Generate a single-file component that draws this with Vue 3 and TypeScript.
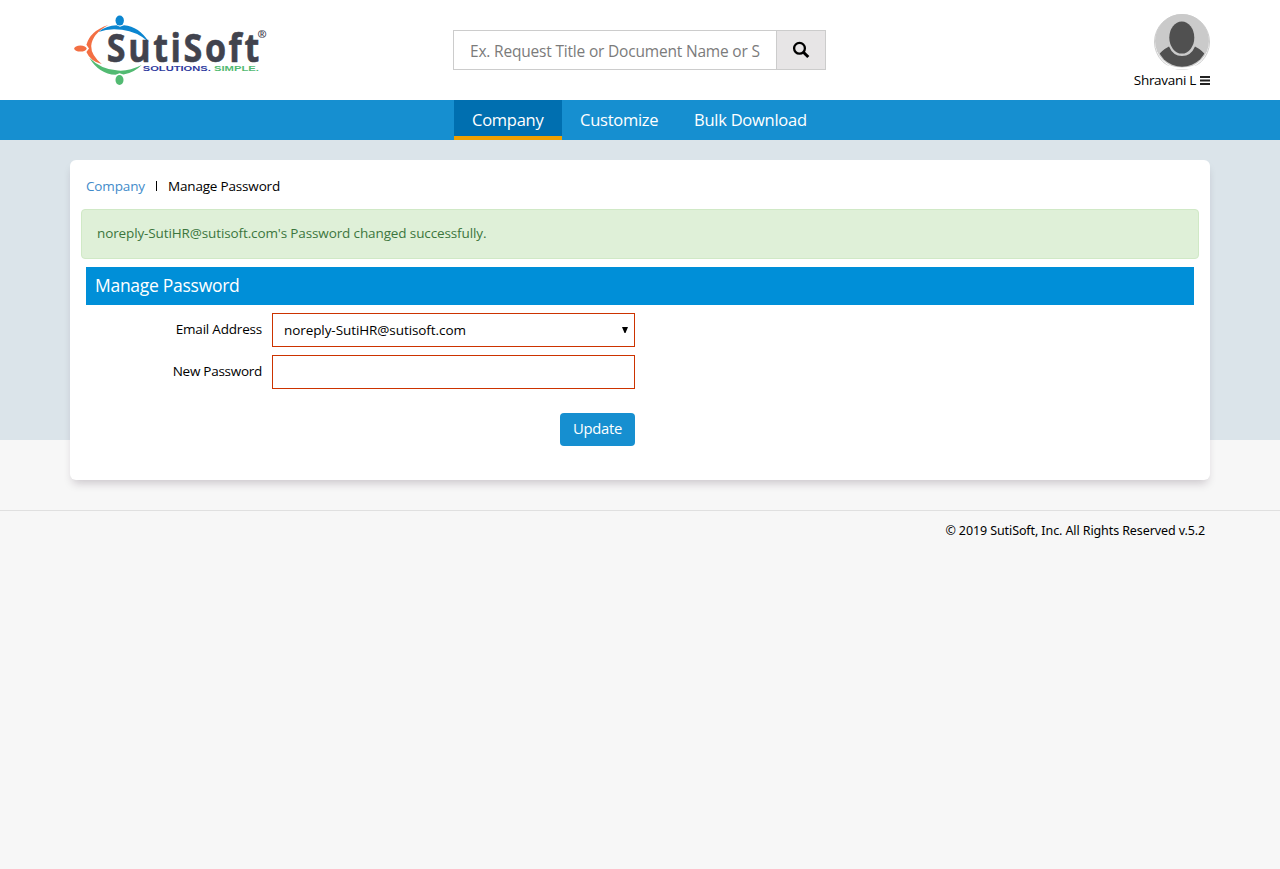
<script setup lang="ts">
import { ref } from 'vue'

const query = ref('')
const email = ref('noreply-SutiHR@sutisoft.com')
const password = ref('')
const tabs = [
  { label: 'Company', cls: 'company', active: true },
  { label: 'Customize', cls: 'customize', active: false },
  { label: 'Bulk Download', cls: 'bulk', active: false },
]
</script>

<template>
  <div class="page">
    <header class="header">
      <svg class="logo" viewBox="70 10 200 80" width="200" height="80" role="img" aria-label="SutiSoft">
        <ellipse cx="119.7" cy="20.6" rx="4.2" ry="5" fill="#0b86d0" />
        <path d="M98.3 31.9Q107 25.3 116.500 25.300L120 26.800L124 25.300Q139 26.500 149 42.200Q137 31.500 122 29.800Q109 28 98.300 31.900Z" fill="#0b86d0" />
        <ellipse cx="80.4" cy="48.6" rx="6.200" ry="3" fill="#f36f43" />
        <path d="M108.300 25Q90 31 86.400 44.800L89 48.500L86.400 52Q90.500 61.500 101.700 64Q91 55 91.200 46Q92 34 108.300 25Z" fill="#f36f43" />
        <path d="M89.300 57.700Q99 74 115.500 74.800L119.500 73.200L123.500 74.600Q134.500 72.500 141.700 65Q129 71.500 118 70.600Q101 69.500 89.300 57.700Z" fill="#52ba72" />
        <ellipse cx="119.500" cy="80" rx="4" ry="5" fill="#52ba72" />
        <text class="wordmark" x="106.800" y="62.400" textLength="155" lengthAdjust="spacingAndGlyphs">SutiSoft</text>
        <text class="registered" x="257.400" y="37.800">®</text>
        <text class="motto solutions" x="142.800" y="70.800" textLength="68" lengthAdjust="spacingAndGlyphs">SOLUTIONS.</text>
        <text class="motto simple" x="214" y="70.800" textLength="45" lengthAdjust="spacingAndGlyphs">SIMPLE.</text>
      </svg>

      <form class="search" @submit.prevent>
        <input v-model="query" type="text" placeholder="Ex. Request Title or Document Name or S" />
        <button type="submit" aria-label="Search">
          <svg viewBox="0 0 18 18" width="18" height="18">
            <circle cx="7.500" cy="7.300" r="5.400" fill="none" stroke="#000" stroke-width="2.300" />
            <path d="M11.400 11.200L16.300 16" stroke="#000" stroke-width="3" fill="none" />
          </svg>
        </button>
      </form>

      <div class="user">
        <svg class="avatar" viewBox="0 0 56 56" width="56" height="56">
          <defs><clipPath id="face"><circle cx="28" cy="27" r="25.700" /></clipPath></defs>
          <circle cx="28" cy="28" r="27.500" fill="#fff" stroke="#ccc" />
          <circle cx="28" cy="27" r="27" fill="#cacaca" />
          <path d="M4 45Q10 53 28 53.500Q46 53 52 45L50 50Q40 55.500 28 55.500Q16 55.500 6 50Z" fill="#fff" />
          <path clip-path="url(#face)" d="M0 47Q6 37 15 32.500Q19 42 28 42Q37 42 41 32.500Q50 37 56 47V56H0Z" fill="#505050" />
          <ellipse cx="27.800" cy="23.600" rx="12.500" ry="16" fill="#505050" />
        </svg>
        <div class="user-name">
          <span>Shravani L</span>
          <svg viewBox="0 0 10 9" width="10" height="9"><path d="M0 1H10M0 4.500H10M0 8H10" stroke="#222" stroke-width="2" /></svg>
        </div>
      </div>
    </header>

    <nav class="nav">
      <a v-for="tab in tabs" :key="tab.label" :class="[tab.cls, { active: tab.active }]"><span>{{ tab.label }}</span></a>
    </nav>

    <main class="band">
      <section class="card">
        <div class="crumbs">
          <a>Company</a><i class="divider"></i><span>Manage Password</span>
        </div>
        <div class="alert"><span>noreply-SutiHR@sutisoft.com's Password changed successfully.</span></div>
        <h1><span>Manage Password</span></h1>
        <form class="form" @submit.prevent>
          <label for="email"><span class="l-email">Email Address</span></label>
          <div class="select">
            <select id="email" v-model="email">
              <option>noreply-SutiHR@sutisoft.com</option>
            </select>
            <svg viewBox="0 0 6 6" width="6" height="6"><path d="M0 0H6L3.500 6H2.500Z" fill="#000" /></svg>
          </div>
          <label for="password"><span class="l-pass">New Password</span></label>
          <input id="password" v-model="password" type="password" />
          <button class="update" type="submit">Update</button>
        </form>
      </section>
    </main>

    <footer class="footer"><span>© 2019 SutiSoft, Inc. All Rights Reserved v.5.2</span></footer>
  </div>
</template>

<style>
body {
  background: #f7f7f7;
}
</style>

<style scoped>
* {
  box-sizing: border-box;
}
.page {
  min-height: 869px;
  background: #f7f7f7;
  color: #000;
  font: 13.5px/20px "Open Sans", "Noto Sans", sans-serif;
  white-space: nowrap;
}
input,
select,
button {
  font-family: inherit;
  margin: 0;
  outline: 0;
}
.header {
  height: 100px;
  padding: 0 70px;
  background: #fff;
  display: grid;
  grid-template-columns: 383px 373px 1fr;
}
.logo {
  margin-top: 10px;
  overflow: visible;
}
.wordmark {
  font: bold 39px "Open Sans", sans-serif;
  letter-spacing: 3px;
  fill: #41434e;
  stroke: #41434e;
  stroke-width: 0.6px;
}
.registered {
  font: bold 11px "Open Sans", sans-serif;
  fill: #41434e;
}
.motto {
  font: bold 8px "Liberation Sans", sans-serif;
}
.solutions {
  fill: #2e3a9e;
}
.simple {
  fill: #52ba72;
}
.search {
  height: 40px;
  margin-top: 30px;
  display: flex;
  border: 1px solid #ccc;
}
.search input {
  width: 323px;
  border: 0;
  border-right: 1px solid #ccc;
  padding: 2px 14px 0 16px;
  font-size: 15.5px;
  letter-spacing: -0.19px;
  color: #555;
  background: #fff;
}
.search input::placeholder {
  color: #7b7b7b;
  opacity: 1;
}
.search button {
  flex: 1;
  border: 0;
  padding: 0;
  background: #e7e5e6;
  display: grid;
  place-items: center;
}
.user {
  padding-top: 14px;
  display: flex;
  flex-direction: column;
  align-items: flex-end;
}
.user-name {
  display: flex;
  align-items: center;
  gap: 4px;
  letter-spacing: -0.3px;
}
.nav {
  height: 40px;
  padding-left: 454px;
  background: #168fd0;
  display: flex;
  color: #fff;
  font-size: 16.5px;
  line-height: 39px;
}
.nav a {
  height: 40px;
  padding-left: 18px;
}
.company {
  width: 108px;
}
.customize {
  width: 114px;
}
.nav .active {
  background: #006fb0;
  border-bottom: 4px solid #f0a000;
}
.nav span {
  letter-spacing: -0.25px;
}
.band {
  height: 300px;
  padding: 20px 70px 0;
  background: #dbe4ea;
}
.card {
  height: 320px;
  padding: 16px;
  border-radius: 6px;
  background: #fff;
  box-shadow: 0 6px 10px -3px rgba(40, 20, 40, 0.22);
}
.crumbs {
  height: 20px;
  display: flex;
  align-items: center;
}
.crumbs a {
  width: 70px;
  color: #428bca;
  letter-spacing: -0.15px;
}
.divider {
  width: 1px;
  height: 10px;
  margin-right: 11px;
  background: #000;
}
.crumbs span {
  letter-spacing: -0.18px;
}
.alert {
  height: 50px;
  margin: 13px -5px 8px;
  padding: 13px 15px;
  border: 1px solid #d0e9c6;
  border-radius: 4px;
  background: #dff0d8;
  color: #3c763d;
}
.alert span {
  letter-spacing: -0.12px;
}
h1 {
  height: 38px;
  margin: 0 0 8px;
  padding-left: 9px;
  background: #008fd8;
  color: #fff;
  font-size: 17.5px;
  font-weight: 400;
  line-height: 37px;
}
h1 span {
  letter-spacing: -0.28px;
}
.form {
  display: grid;
  grid-template-columns: 176px 363px;
  grid-template-rows: 34px 34px 33px;
  column-gap: 10px;
  row-gap: 8px;
}
.form label {
  text-align: right;
  line-height: 32px;
}
.l-email {
  letter-spacing: -0.2px;
}
.l-pass {
  letter-spacing: -0.27px;
}
.form select,
.form input {
  width: 363px;
  height: 34px;
  border: 1px solid #cc3300;
  border-radius: 0;
  background: #fff;
  color: #000;
  appearance: none;
  padding: 0 11px 1px;
  font-size: 13.5px;
  letter-spacing: -0.08px;
}
.select {
  position: relative;
}
.select svg {
  position: absolute;
  right: 7px;
  top: 14px;
  pointer-events: none;
}
.update {
  grid-column: 2;
  justify-self: end;
  width: 75px;
  height: 33px;
  margin-top: 16px;
  padding: 0 0 3px;
  border: 0;
  border-radius: 4px;
  background: #168fd0;
  color: #fff;
  font-size: 14.8px;
  letter-spacing: -0.25px;
}
.footer {
  margin-top: 70px;
  padding: 10px 75px 0;
  border-top: 1px solid #e0e0e0;
  text-align: right;
  font: 12.5px/20px "Noto Sans", "Open Sans", sans-serif;
}
.footer span {
  letter-spacing: -0.1px;
}
</style>
